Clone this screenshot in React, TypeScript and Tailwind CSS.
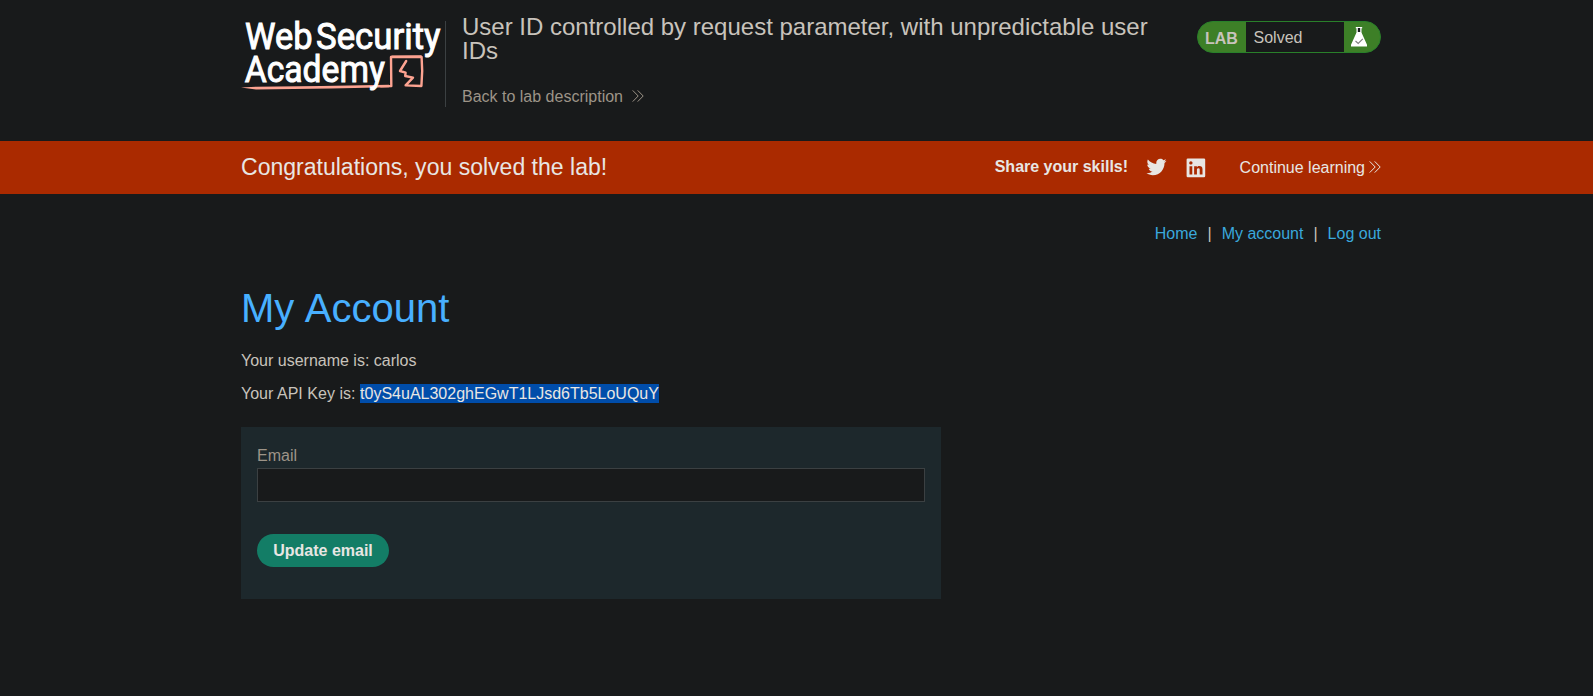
import React from "react";

function Logo() {
  return (
    <svg width="204" height="86" viewBox="0 0 204 86" className="block shrink-0 overflow-visible" aria-label="Web Security Academy">
      <g stroke="#fca391" fill="none" strokeLinejoin="round" strokeLinecap="round">
        <path d="M0 66.4 L15 65.7 L80 65 L148 63.8 L148 66.3 L90 67.6 L15 68.6 Z" fill="#fca391" stroke="none" />
        <path d="M140 65.4 L150.3 65 L150 36 L180.6 36 L181.2 50 L180.4 65 L164.6 64.4 L172 56.6 L164.2 55 L164.6 51.7 L159 50 L165.2 40" strokeWidth="2.4" />
        <path d="M151 35.2 L180 35" strokeWidth="1.6" />
      </g>
      <g fill="#ffffff" stroke="#ffffff" strokeWidth="1" className="font-[Roboto,sans-serif] text-[37.5px] font-normal">
        <text x="4" y="28.4" textLength="67.5" lengthAdjust="spacingAndGlyphs">Web</text>
        <text x="75" y="28.4" textLength="124.5" lengthAdjust="spacingAndGlyphs">Security</text>
        <text x="3.8" y="60.8" textLength="140" lengthAdjust="spacingAndGlyphs">Academy</text>
      </g>
    </svg>
  );
}

function Chevrons({ className }: { className: string }) {
  return (
    <svg width="12" height="12" viewBox="0 0 12 12" fill="none" stroke="currentColor" strokeWidth="1" className={className}>
      <path d="M0.7 0.4 L6.2 6 L0.7 11.6 M5.7 0.4 L11.2 6 L5.7 11.6" />
    </svg>
  );
}

function Flask() {
  return (
    <svg width="16" height="20" viewBox="0 0 16 20" className="block">
      <path d="M4.8 0H11.2V1.2H10.5V5.5L16 17.8V19.6H0V17.8L5.5 5.5V1.2H4.8Z" fill="#fff" />
      <path d="M6.8 1H9.2V5H6.8Z" fill="#181a1b" />
      <path d="M4.5 14 L7.2 16.5 L11.8 11.8" fill="none" stroke="#7d7d7d" strokeWidth="1.1" />
    </svg>
  );
}

function LabStatus() {
  return (
    <div className="flex h-8 w-[184px] shrink-0 overflow-hidden rounded-full border border-[#29802a] bg-[#3d7f27]">
      <span className="w-12 pl-[7px] pt-[2px] text-base leading-[29px] font-bold text-[#c8c3bc]">LAB</span>
      <p className="flex-1 bg-[#181a1b] pl-[7.5px] leading-[31px] text-[#c8c3bc]">Solved</p>
      <span className="w-9 pl-[7px] pt-[5px]">
        <Flask />
      </span>
    </div>
  );
}

function Header() {
  return (
    <header className="ml-[241px] flex h-[141px] w-[1140px] items-start pt-[21px]">
      <Logo />
      <div className="h-[86px] flex-1 border-l border-[#3b4042] pl-4">
        <h2 className="-mt-[6px] w-[700px] text-2xl leading-6 text-[#c8c3bc]">
          User ID controlled by request parameter, with unpredictable user IDs
        </h2>
        <a className="mt-[25px] flex items-center leading-[18px] text-[#9d9488]">
          Back to lab description
          <Chevrons className="mb-[2px] ml-[9px]" />
        </a>
      </div>
      <LabStatus />
    </header>
  );
}

function Banner() {
  return (
    <section className="h-[53px] bg-[#aa2a00] text-[#e8e6e3]">
      <div className="ml-[241px] flex h-full w-[1140px] items-center">
        <h4 className="flex-1 pb-[2px] text-[23.04px] leading-[26px]">Congratulations, you solved the lab!</h4>
        <span className="pb-[2px] font-bold">Share your skills!</span>
        <svg width="23" height="23" viewBox="0 0 24 24" fill="#e8e6e3" className="mb-[2px] ml-[17px]">
          <path d="M22.46 6c-.77.35-1.6.58-2.46.69.88-.53 1.56-1.37 1.88-2.38-.83.5-1.75.85-2.72 1.05C18.37 4.5 17.26 4 16 4c-2.35 0-4.27 1.92-4.27 4.29 0 .34.04.67.11.98C8.28 9.09 5.11 7.38 3 4.79c-.37.63-.58 1.37-.58 2.15 0 1.49.75 2.81 1.91 3.56-.71 0-1.37-.2-1.95-.5v.03c0 2.08 1.48 3.82 3.44 4.21a4.22 4.22 0 0 1-1.93.07 4.28 4.28 0 0 0 4 2.98 8.521 8.521 0 0 1-5.33 1.84c-.34 0-.68-.02-1.02-.06C3.44 20.29 5.7 21 8.12 21 16 21 20.33 14.46 20.33 8.79c0-.19 0-.37-.01-.56.84-.6 1.56-1.36 2.14-2.23z" />
        </svg>
        <svg width="24" height="24" viewBox="0 0 24 24" className="ml-[15.5px]">
          <rect x="2.6" y="2.6" width="18.6" height="18.6" rx="1.2" fill="#e8e6e3" />
          <path fill="#aa2a00" d="M18.5 18.5v-5.3a3.26 3.26 0 0 0-3.26-3.26c-.85 0-1.84.52-2.32 1.3v-1.11h-2.79v8.37h2.79v-4.93c0-.77.62-1.4 1.39-1.4a1.4 1.4 0 0 1 1.4 1.4v4.93h2.79M6.88 8.56a1.68 1.68 0 0 0 1.68-1.68c0-.93-.75-1.69-1.68-1.69a1.69 1.69 0 0 0-1.69 1.69c0 .93.76 1.68 1.69 1.68m1.39 9.94v-8.37H5.5v8.37h2.77z" />
        </svg>
        <a className="ml-8 flex items-center">
          Continue learning
          <Chevrons className="mb-px ml-1" />
        </a>
      </div>
    </section>
  );
}

export default function App() {
  return (
    <div className="min-h-[696px] bg-[#181a1b] font-['Liberation_Sans',Arial,sans-serif] text-base text-[#c8c3bc]">
      <Header />
      <Banner />
      <main className="ml-[241px] w-[1140px]">
        <nav className="flex justify-end gap-[10px] pt-[31px] leading-[18px]">
          <a className="text-[#3aa8dc]">Home</a>
          <span>|</span>
          <a className="text-[#3aa8dc]">My account</a>
          <span>|</span>
          <a className="text-[#3aa8dc]">Log out</a>
        </nav>
        <h1 className="mt-[42px] text-[40px] leading-[46px] text-[#48b0ff] [word-spacing:1.5px]">My Account</h1>
        <p className="mt-[21px] leading-[18px]">Your username is: carlos</p>
        <p className="mt-[15px] leading-[18px] [word-spacing:0.12px]">
          Your API Key is: <span className="bg-[#004daa] py-px text-[#e8e6e3]">t0yS4uAL302ghEGwT1LJsd6Tb5LoUQuY</span>
        </p>
        <form className="mt-6 h-[172px] w-[700px] bg-[#1d282c] px-4 pt-5">
          <label className="block h-[21px] leading-[18px] text-[#9d9488]">Email</label>
          <input type="email" className="block h-[34px] w-full border border-[#3b4042] bg-[#181a1b] px-2 outline-none" />
          <button type="button" className="mt-8 h-[33px] w-[132px] rounded-full bg-[#137d66] leading-[33px] font-bold text-[#e8e6e3]">
            Update email
          </button>
        </form>
      </main>
    </div>
  );
}
